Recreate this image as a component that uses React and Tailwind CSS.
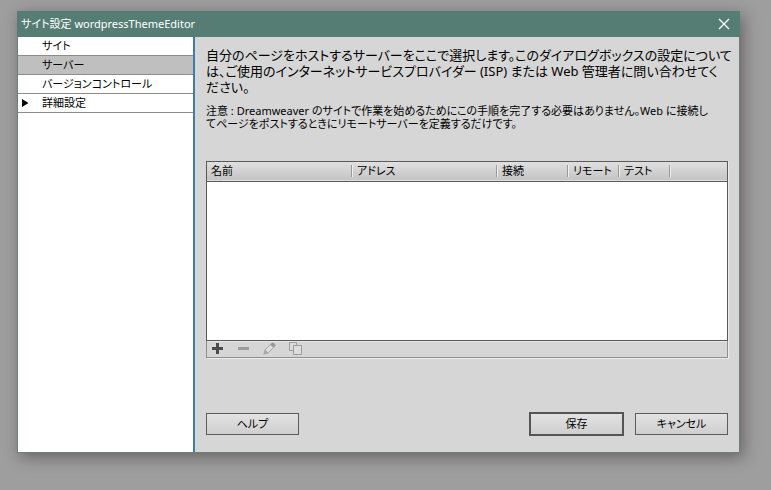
import React from "react";

const categories = [
  { label: "サイト" },
  { label: "サーバー", active: true },
  { label: "バージョンコントロール" },
  { label: "詳細設定", expandable: true },
];

const columns = [
  { label: "名前", width: "w-[146px]" },
  { label: "アドレス", width: "w-[145px]" },
  { label: "接続", width: "w-[71px]" },
  { label: "リモート", width: "w-[51px]" },
  { label: "テスト", width: "w-[51px]" },
  { label: "", width: "" },
];

const CloseIcon = () => (
  <svg width="12" height="12" viewBox="0 0 12 12" stroke="currentColor" strokeWidth="1.3">
    <path d="M1 1l10 10M11 1 1 11" />
  </svg>
);

const PlusIcon = () => (
  <svg width="13" height="13" viewBox="0 0 13 13" fill="#4a4a4a">
    <path d="M5 1h3v4h4v3H8v4H5V8H1V5h4z" />
  </svg>
);

const MinusIcon = () => (
  <svg width="13" height="13" viewBox="0 0 13 13" fill="#9d9d9d">
    <path d="M1 5h11v3H1z" />
  </svg>
);

const PencilIcon = () => (
  <svg width="13" height="13" viewBox="0 0 13 13" fill="none">
    <path d="M2 8 7.400 2.600l3 3L5 11z" fill="#dedede" stroke="#a6a6a6" />
    <path d="M7.200 2.400 9.200.5c.9-.6 3.900 2.200 3.300 3.300l-1.900 2z" fill="#999" />
    <path d="M1.600 7.600.2 12.800 5.400 11.400z" fill="#a8a8a8" />
  </svg>
);

const CopyIcon = () => (
  <svg width="13" height="13" viewBox="0 0 13 13" fill="#dcdcdc" stroke="#9c9c9c">
    <path d="M.5.500h7v8h-7z" />
    <path d="M4.500 3.500h8v9h-8z" />
  </svg>
);

const tools = [
  { label: "追加", icon: <PlusIcon /> },
  { label: "削除", icon: <MinusIcon />, disabled: true },
  { label: "編集", icon: <PencilIcon />, disabled: true },
  { label: "複製", icon: <CopyIcon />, disabled: true },
];

const DialogButton = ({ children, primary }) => (
  <button
    type="button"
    className={`flex items-center justify-center bg-linear-to-b from-[#e2e2e2] to-[#cfcfcf] ${
      primary
        ? "h-6 w-[95px] border-2 border-[#555]"
        : "h-[22px] w-[93px] border border-[#5c5c5c]"
    }`}
  >
    {children}
  </button>
);

const Sidebar = () => (
  <nav className="w-[177px] shrink-0 border-r-2 border-[#3e7cab] bg-white">
    <ul>
      {categories.map((item) => (
        <li key={item.label}>
          <a
            href="#"
            className={`flex h-[19px] items-center border-b border-[#8c8c8c] ${
              item.active ? "bg-[#bfbfbf]" : ""
            }`}
          >
            <span className="w-6 pl-1">
              {item.expandable && (
                <svg width="7" height="8" viewBox="0 0 7 8">
                  <path d="M0 0 6.500 4 0 8z" />
                </svg>
              )}
            </span>
            {item.label}
          </a>
        </li>
      ))}
    </ul>
  </nav>
);

const ServerTable = () => (
  <div className="flex h-[197px] flex-col border border-[#8f8f8f] shadow-[1px_1px_0_#ececec]">
    <div className="-mx-px -mt-px flex-1 border border-[#5a5a5a] bg-white">
      <table className="w-full table-fixed border-collapse text-left">
        <thead>
          <tr className="h-[19px] border-b border-[#5a5a5a] bg-linear-to-b from-[#e0e0e0] to-[#c4c4c4]">
            {columns.map((col, i) => (
              <th key={i} scope="col" className={`p-0 font-normal ${col.width}`}>
                <div className="flex items-center justify-between">
                  <span className="pl-1">{col.label}</span>
                  {i < columns.length - 1 && (
                    <span className="h-3 w-[2px] border-l border-[#999] bg-[#efefef]" />
                  )}
                </div>
              </th>
            ))}
          </tr>
        </thead>
        <tbody />
      </table>
    </div>
    <div className="flex h-4 items-start gap-[13px] border-t border-[#e6e6e6] pl-1">
      {tools.map((tool) => (
        <button
          key={tool.label}
          type="button"
          aria-label={tool.label}
          disabled={tool.disabled}
        >
          {tool.icon}
        </button>
      ))}
    </div>
  </div>
);

const App = () => {
  return (
    <div className="flex min-h-screen flex-col bg-[#9e9e9e] pt-[11px] pr-[31px] pb-[37px] pl-[17px] font-['Noto_Sans','Noto_Sans_CJK_JP',sans-serif] text-[11px] leading-4 text-black [font-feature-settings:'palt']">
      <div
        role="dialog"
        aria-labelledby="dialog-title"
        className="flex flex-1 flex-col border border-[#6b807a] bg-[#d6d6d6] shadow-[3px_4px_14px_rgba(50,40,40,0.5)]"
      >
        <header className="-mx-px -mt-px flex h-[26px] items-center justify-between bg-[#567d73] pr-[10px] pl-1 text-white">
          <h1 id="dialog-title">サイト設定 wordpressThemeEditor</h1>
          <button type="button" aria-label="閉じる">
            <CloseIcon />
          </button>
        </header>

        <div className="flex flex-1">
          <Sidebar />
          <main className="flex min-w-0 flex-1 flex-col pt-[10px] pr-[11px] pb-4 pl-[11px]">
            <p className="text-[13px] whitespace-nowrap">
              自分のページをホストするサーバーをここで選択します。このダイアログボックスの設定について
              <br />
              は、ご使用のインターネットサービスプロバイダー (ISP) または Web 管理者に問い合わせてく
              <br />
              ださい。
            </p>
            <p className="mt-[9px] mb-[31px] leading-[13px] whitespace-nowrap">
              注意 : Dreamweaver のサイトで作業を始めるためにこの手順を完了する必要はありません。Web に接続し
              <br />
              てページをポストするときにリモートサーバーを定義するだけです。
            </p>
            <ServerTable />
            <footer className="mt-auto flex items-center justify-between">
              <DialogButton>ヘルプ</DialogButton>
              <div className="flex items-center gap-[11px]">
                <DialogButton primary>保存</DialogButton>
                <DialogButton>キャンセル</DialogButton>
              </div>
            </footer>
          </main>
        </div>
      </div>
    </div>
  );
};

export default App;
